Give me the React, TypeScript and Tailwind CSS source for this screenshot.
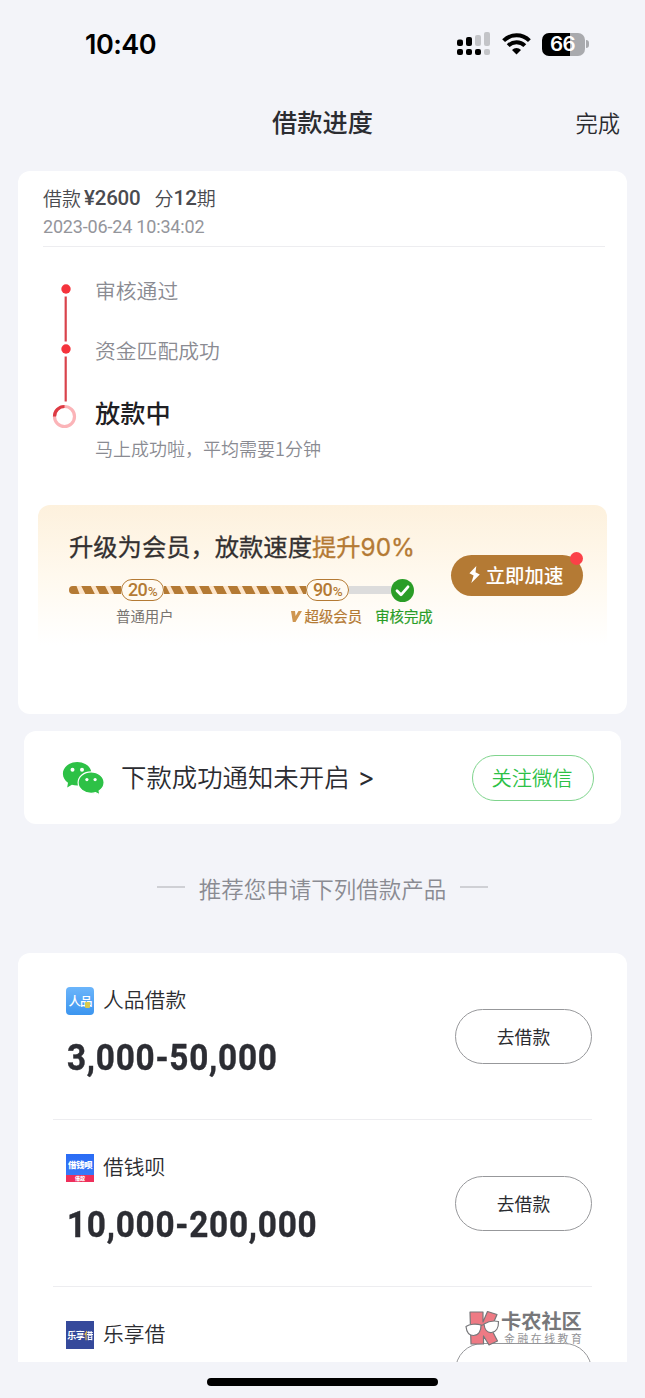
import * as React from "react";

const Signal = () => (
  <svg width="34" height="24" viewBox="0 0 34 24" aria-hidden="true">
    <g fill="#000">
      <rect x="0" y="7.5" width="6" height="6.5" rx="2" />
      <rect x="9" y="5" width="6" height="9" rx="2" />
      <rect x="0" y="17" width="6" height="6" rx="2" />
      <rect x="9" y="17" width="6" height="6" rx="2" />
      <rect x="18" y="17" width="6" height="6" rx="2" />
    </g>
    <g fill="#c3c4c8">
      <rect x="18" y="3" width="6" height="11" rx="2" />
      <rect x="27" y="0" width="6" height="14" rx="2" />
      <rect x="27" y="17" width="6" height="6" rx="2" />
    </g>
  </svg>
);

const Wifi = () => (
  <svg width="29" height="22" viewBox="0 0 29 22" aria-hidden="true">
    <g fill="none" stroke="#000" strokeWidth="4">
      <path d="M1.600 7.700a18.200 18.200 0 0 1 25.800 0" />
      <path d="M6.200 12.700a11.700 11.700 0 0 1 16.600 0" />
    </g>
    <path d="M14.500 21.600l-4.500-4.700a6.300 6.300 0 0 1 9 0z" fill="#000" />
  </svg>
);

const WechatIcon = () => (
  <svg width="43" height="34" viewBox="0 0 43 34" aria-hidden="true">
    <path
      d="M15.200 1C7.100 1 .9 6.200.9 12.700c0 3.700 2 6.900 5.100 9.100L5.200 26.500l4.700-2.800c1.700.5 3.400.8 5.300.8 8 0 14.300-5.200 14.300-11.800S23.200 1 15.200 1z"
      fill="#2dc146"
    />
    <circle cx="10.500" cy="8.700" r="2" fill="#fff" />
    <circle cx="20" cy="8.700" r="2" fill="#fff" />
    <path
      d="M29.100 10.900c-7.200 0-13 4.700-13 10.700s5.800 10.700 13 10.700c1.600 0 3-.2 4.400-.6l4.500 2.200-.9-3.800c2.900-1.900 5-4.900 5-8.500 0-6-5.800-10.700-13-10.700z"
      fill="#2dc146"
      stroke="#fff"
      strokeWidth="1.200"
    />
    <circle cx="24.900" cy="18.600" r="1.600" fill="#fff" />
    <circle cx="33.100" cy="18.600" r="1.600" fill="#fff" />
  </svg>
);

const StatusBar = () => (
  <div className="flex h-[88px] items-center justify-between pl-[85px] pr-[56px]">
    <span className="font-['Inter',sans-serif] text-[27px] font-semibold leading-none tracking-[-0.500px] text-black">
      10:40
    </span>
    <div className="flex items-center">
      <Signal />
      <div className="ml-[11px]">
        <Wifi />
      </div>
      <div className="ml-[11px] flex h-[23px] w-[43px] items-center justify-center rounded-[7px] bg-[linear-gradient(90deg,#000_66%,#a9aaae_66%)] pr-[2px] font-['Inter',sans-serif] text-[20.500px] font-semibold leading-none tracking-[-0.700px] text-white">
        66
      </div>
      <div className="ml-[1px] h-[8px] w-[3px] rounded-r-full bg-[#a9aaae]" />
    </div>
  </div>
);

const ProgressPill = ({ value }: { value: string }) => (
  <div className="flex h-[22px] w-[43px] items-center justify-center rounded-full border-[1.5px] border-[#b47a34] bg-[#fffaf1] font-['Roboto',sans-serif] text-[18px] font-medium leading-none tracking-[-0.800px] text-[#b47a34]">
    {value}
    <span className="pl-px pt-[4px] text-[13.500px]">%</span>
  </div>
);

const UpgradeBanner = () => (
  <div className="mx-[20px] flex h-[140px] justify-between rounded-t-[12px] bg-[linear-gradient(180deg,#fdf1dd_0%,#fff9ee_50%,#ffffff_100%)] pl-[31px] pr-[24px]">
    <div className="w-[366px] pt-[28px]">
      <p className="h-[26px] whitespace-nowrap text-[24.300px] leading-[26px] text-[#333030] [-webkit-text-stroke:0.3px]">
        升级为会员，放款速度<span className="text-[#b47a34]">提升</span>
        <span className="font-['Inter',sans-serif] text-[24.300px] text-[#b47a34]">90%</span>
      </p>
      <div className="mt-[20px] flex h-[22px] items-center">
        <svg width="52" height="8" className="shrink-0" aria-hidden="true">
          <rect width="52" height="8" rx="4" fill="#fde6cc" />
          <path
            d="M4 0h3.500l3 8H4a4 4 0 0 1 0-8zM12.300 0h9.500l4 8h-9.500zM26.600 0h9.500l4 8h-9.500zM41 0h11v8h-7z"
            fill="#b47a34"
          />
        </svg>
        <ProgressPill value="20" />
        <svg width="142" height="8" className="shrink-0" aria-hidden="true">
          <rect width="142" height="8" fill="#fde6cc" />
          <path
            d="M0 0h2l4 8H0zM6.500 0h9.500l4 8h-9.500zM20.800 0h9.500l4 8h-9.500zM35.100 0h9.500l4 8h-9.500zM49.400 0h9.500l4 8h-9.500zM63.700 0h9.500l4 8h-9.500zM78 0h9.500l4 8h-9.500zM92.300 0h9.500l4 8h-9.500zM106.600 0h9.500l4 8h-9.500zM120.900 0h9.500l4 8h-9.500zM135.200 0h6.800v8h-2.800z"
            fill="#b47a34"
          />
        </svg>
        <ProgressPill value="90" />
        <div className="h-[8px] w-[42px] bg-[#dcdcdc]" />
        <svg width="23" height="23" viewBox="0 0 23 23" className="shrink-0" aria-hidden="true">
          <circle cx="11.500" cy="11.500" r="11.500" fill="#2a9d27" />
          <path
            d="M6 11.800l4 4 7-8"
            fill="none"
            stroke="#fff"
            strokeWidth="2.800"
            strokeLinecap="round"
            strokeLinejoin="round"
          />
        </svg>
      </div>
      <div className="mt-[6px] flex items-center text-[14.400px] leading-[18px]">
        <span className="ml-[47px] text-[#77736f]">普通用户</span>
        <svg width="11" height="12" viewBox="0 0 11 12" className="ml-[117px]" aria-hidden="true">
          <path d="M0 1h4l.6 5L7.500 1H11L4.500 12H1.800z" fill="#cf9650" />
        </svg>
        <span className="ml-[3px] text-[#b47a34] [-webkit-text-stroke:0.2px]">超级会员</span>
        <span className="ml-[13px] text-[#2a9d27] [-webkit-text-stroke:0.2px]">审核完成</span>
      </div>
    </div>
    <div className="relative mt-[50px] h-[41px] w-[132px]">
      <button
        type="button"
        className="flex h-full w-full items-center justify-center rounded-full bg-[#b47a34] pb-[2px] pr-[2px] text-[19.400px] font-medium leading-none text-white"
      >
        <svg width="11" height="17" viewBox="0 0 11 17" className="mr-[6px]" aria-hidden="true">
          <path d="M7.300 0L.4 7.200l4.200 2.300L2.300 17 10.800 8.500 6.500 6.300z" fill="#fff" />
        </svg>
        立即加速
      </button>
      <span className="absolute -top-[3px] right-0 h-[13px] w-[13px] rounded-full bg-[#fb4148]" />
    </div>
  </div>
);

const ProgressCard = () => (
  <section className="mx-[18px] h-[543px] rounded-[12px] bg-white">
    <div className="ml-[25px] mr-[22px] h-[76px] border-b border-[#ededf0] pt-[16px]">
      <div className="flex items-center whitespace-pre text-[19px] font-[350] leading-[22px] text-[#4a4b50]">
        借款
        <span className="ml-[3px] font-['Roboto',sans-serif] text-[20.500px] font-medium tracking-[-0.200px]">¥2600</span>
        <span className="ml-[14px]">分</span>
        <span className="font-['Roboto',sans-serif] text-[20.500px] font-medium">12</span>期
      </div>
      <p className="mt-[7px] font-['Roboto',sans-serif] text-[18px] font-normal leading-[22px] tracking-[-0.180px] text-[#94959b]">
        2023-06-24 10:34:02
      </p>
    </div>

    <div className="flex h-[258px] pl-[34px]">
      <svg width="26" height="200" viewBox="0 0 26 200" aria-hidden="true">
        <circle cx="14" cy="42" r="4.700" fill="#f5333c" />
        <path d="M13.700 49.500v45M13.700 109.500v45" stroke="#d9434c" strokeWidth="2.200" />
        <circle cx="14" cy="102" r="4.700" fill="#f5333c" />
        <circle cx="12.500" cy="169.500" r="10" fill="none" stroke="#fbb4b8" strokeWidth="3.200" />
        <path d="M2.500 169.500a10 10 0 0 1 10-10" fill="none" stroke="#dd3a43" strokeWidth="3.200" />
      </svg>
      <div className="pl-[17px] pt-[32px] text-[20.800px] font-[350] text-[#8a8b92]">
        <p className="leading-[22px]">审核通过</p>
        <p className="mt-[38px] leading-[22px]">资金匹配成功</p>
        <p className="mt-[38px] text-[25.200px] font-medium leading-[26px] text-[#1f2024]">放款中</p>
        <p className="mt-[13px] text-[18px] leading-[20px]">马上成功啦，平均需要1分钟</p>
      </div>
    </div>

    <UpgradeBanner />
  </section>
);

const WechatCard = () => (
  <section className="mx-[24px] mt-[17px] flex h-[93px] items-center rounded-[12px] bg-white pl-[38px] pr-[27px]">
    <WechatIcon />
    <p className="ml-[16px] flex-1 text-[25.400px] font-[350] leading-none text-[#2b2c31]">
      下款成功通知未开启
      <span className="ml-[8px] font-['Inter',sans-serif] text-[26px] font-normal">&gt;</span>
    </p>
    <button
      type="button"
      className="h-[46px] w-[122px] rounded-full border border-[#7fd48d] pr-[2px] text-[20.300px] font-[350] leading-none text-[#2dc146]"
    >
      关注微信
    </button>
  </section>
);

const RenpinLogo = () => (
  <div className="relative flex h-[28px] w-[28px] items-center justify-center rounded-[4px] bg-linear-to-b from-[#6bb5fb] to-[#3b95ef]">
    <span className="text-[12.500px] font-medium leading-none tracking-[-1px] text-white">人品</span>
    <span className="absolute bottom-[7px] right-[4px] h-[6px] w-[5px] rounded-[1px] bg-[#d9c94e]" />
  </div>
);

const JieqianLogo = () => (
  <div className="flex h-[28px] w-[28px] flex-col items-center overflow-hidden bg-linear-to-b from-[#2a6cf5] to-[#3b7cf8] font-black leading-none text-white">
    <span className="h-[21px] whitespace-nowrap pt-[6px] text-[8.500px] tracking-[-0.500px]">借钱呗</span>
    <span className="h-[7px] w-full bg-[#ee2f5b] text-center text-[5px] leading-[6px]">借款</span>
  </div>
);

const LexiangLogo = () => (
  <div className="flex h-[28px] w-[28px] items-center justify-center whitespace-nowrap bg-[#35499b] text-[9px] font-bold leading-none tracking-[-0.500px] text-white">
    <span>
      乐享<span className="bg-[linear-gradient(90deg,#f2c94c_35%,#fff_35%)] bg-clip-text text-transparent">借</span>
    </span>
  </div>
);

const Watermark = () => (
  <div className="absolute left-[447px] top-[356px] flex">
    <svg width="35" height="38" viewBox="0 0 35 38" aria-hidden="true">
      <g stroke="#77777a" strokeWidth="1.200" strokeLinejoin="round">
        <path d="M5 3h13v10l4.500-10.500 9.500 3-6 14 6.500 12.500-8.500 4-5.500-9v8H6z" fill="#ee7a84" />
        <path
          d="M1 17.500c3.500-2.500 10-3 15-1.500.3 6-2.600 10.500-7.500 10.500-4.500 0-7-4-7.500-9zM19 15c4-2.500 10-3.500 14.500-2.500.2 6-2.400 10.500-7 11-4.300.4-7-3.500-7.500-8.500z"
          fill="#fff"
        />
        <path d="M16 16.500l3-1" fill="none" />
      </g>
    </svg>
    <div className="pl-px text-[#77777a]">
      <p className="text-[20.200px] font-bold leading-[24px]">卡农社区</p>
      <p className="pl-[3px] text-[10.800px] leading-[11px] tracking-[2.600px] text-[#929295]">金融在线教育</p>
    </div>
  </div>
);

const products = [
  { name: "人品借款", amount: "3,000-50,000", logo: <RenpinLogo />, action: "去借款" },
  { name: "借钱呗", amount: "10,000-200,000", logo: <JieqianLogo />, action: "去借款" },
  { name: "乐享借", amount: "", logo: <LexiangLogo />, action: "" },
];

const ProductList = () => (
  <section className="relative mx-[18px] h-[409px] overflow-hidden rounded-t-[12px] bg-white">
    {products.map((item) => (
      <div
        key={item.name}
        className="ml-[35px] mr-[35px] flex h-[167px] justify-between border-b border-[#ededf0] pl-[13px]"
      >
        <div className="pt-[34px]">
          <div className="flex h-[28px] items-center">
            {item.logo}
            <span className="ml-[9px] pb-[4px] text-[20.800px] font-[350] leading-none text-[#2b2c31]">{item.name}</span>
          </div>
          <p className="ml-px mt-[24px] origin-left scale-x-90 font-['Roboto',sans-serif] text-[37px] font-bold leading-[38px] tracking-[0.850px] text-[#2c2d33] [-webkit-text-stroke:0.4px]">
            {item.amount}
          </p>
        </div>
        <button
          type="button"
          className="mt-[56px] h-[55px] w-[137px] rounded-full border border-[#97989b] pt-px text-[17.800px] leading-none text-[#2b2c31]"
        >
          {item.action}
        </button>
      </div>
    ))}
    <Watermark />
  </section>
);

export default function App() {
  return (
    <main className="flex h-[1398px] w-[645px] flex-col overflow-hidden bg-[#f3f4f9] font-['Noto_Sans_CJK_SC',sans-serif]">
      <StatusBar />
      <header className="grid h-[83px] grid-cols-3 items-center px-[25px] pb-[15px]">
        <span />
        <h1 className="text-center text-[25.200px] font-medium leading-none text-[#2b2c31]">借款进度</h1>
        <button type="button" className="justify-self-end text-[22.300px] font-[350] leading-none text-[#2b2c31]">
          完成
        </button>
      </header>
      <ProgressCard />
      <WechatCard />
      <div className="flex h-[129px] items-center justify-center">
        <span className="mb-[3px] h-[2px] w-[28px] bg-[#cfd0d5]" />
        <h2 className="mx-[14px] text-[22.500px] font-[350] leading-none text-[#8a8b92]">推荐您申请下列借款产品</h2>
        <span className="mb-[3px] h-[2px] w-[28px] bg-[#cfd0d5]" />
      </div>
      <ProductList />
      <div className="mx-auto mt-[16px] h-[8px] w-[231px] rounded-full bg-black" />
    </main>
  );
}
